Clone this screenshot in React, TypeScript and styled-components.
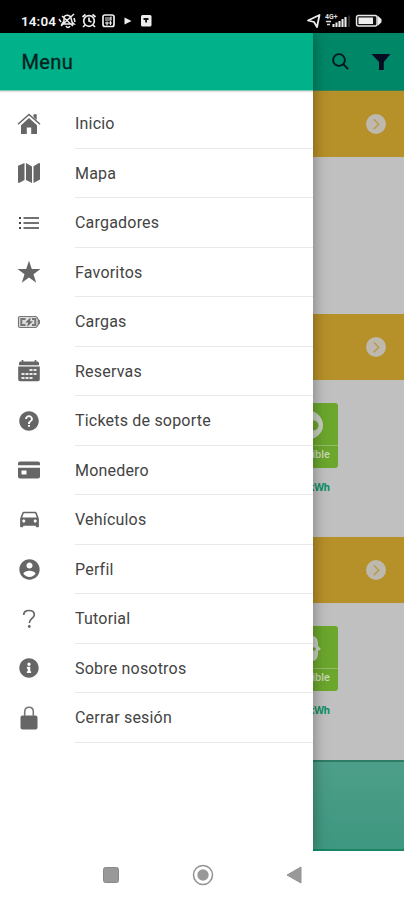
import React from "react";
import styled, { createGlobalStyle } from "styled-components";
import { IoMdHelpCircle, IoMdCar, IoMdContact } from "react-icons/io";
import { FaInfoCircle } from "react-icons/fa";

const GlobalStyle = createGlobalStyle`
  * { box-sizing: border-box; }
  body { margin: 0; background: #fff; font-family: Roboto, "Liberation Sans", sans-serif; }
`;

const Phone = styled.div`
  display: flex;
  flex-direction: column;
  width: 404px;
  height: 900px;
  overflow: hidden;
  background: #fff;
`;

const StatusBar = styled.header`
  display: flex;
  align-items: center;
  height: 33px;
  padding: 9px 20px 0 21px;
  background: #000;
  color: #f4f4f4;
  svg { display: block; flex: none; }
`;

const Clock = styled.span`
  width: 37px;
  font-size: 13.5px;
  font-weight: 600;
  line-height: 16px;
  letter-spacing: 0.1px;
`;

const Gap = styled.span`
  flex: 1;
`;

const Screen = styled.div`
  position: relative;
  height: 818px;
`;

const Page = styled.main`
  display: flex;
  flex-direction: column;
  height: 818px;
  background: #c0c0c0;
`;

const Toolbar = styled.div`
  display: flex;
  align-items: center;
  justify-content: flex-end;
  gap: 21px;
  flex: none;
  height: 58px;
  padding: 0 13px 0 0;
  background: #008767;
  border-bottom: 1px solid #388359;
  color: #07171d;
`;

const StationHeader = styled.div`
  display: flex;
  align-items: center;
  justify-content: flex-end;
  height: 66px;
  flex: none;
  padding-right: 18px;
  background: #b69028;
`;

const StationBody = styled.section<{ $h: number }>`
  display: flex;
  flex-direction: column;
  align-items: flex-end;
  height: ${(p) => p.$h}px;
  flex: none;
  padding: 23px 66px 0 0;
`;

const Plug = styled.div`
  display: flex;
  flex-direction: column;
  width: 65px;
  height: 65px;
  background: #6ba62d;
  border-radius: 3px;
  overflow: hidden;
`;

const PlugArt = styled.div`
  height: 43px;
  border-bottom: 1px solid #93bd68;
  svg { display: block; }
`;

const PlugState = styled.span`
  padding-right: 8px;
  color: #c9d9b6;
  font: 500 11px/17px Roboto, sans-serif;
  text-align: right;
`;

const Power = styled.span`
  margin: 12px 8px 0 0;
  color: #079064;
  font: 700 10px/15px "Open Sans", sans-serif;
  letter-spacing: -0.2px;
`;

const Footer = styled.footer`
  flex: 1;
  border-top: 2px solid #2e7c64;
  border-bottom: 2px solid #178566;
  background: linear-gradient(#4d9e89, #3e9780);
`;

const Drawer = styled.aside`
  position: absolute;
  top: 0;
  left: 0;
  width: 313px;
  height: 818px;
  background: #fff;
  box-shadow: 0 0 14px rgba(0, 0, 0, 0.38);
  clip-path: inset(0 -30px 0 0);
`;

const DrawerHeader = styled.h1`
  height: 58px;
  margin: 0;
  padding-left: 21.5px;
  background: #00b189;
  border-bottom: 1px solid #82c9b6;
  box-shadow: 0 1px 1px rgba(0, 0, 0, 0.12);
  color: #03201f;
  font-size: 20px;
  font-weight: 400;
  line-height: 58px;
  letter-spacing: 0.4px;
  -webkit-text-stroke: 0.3px #03201f;
`;

const List = styled.ul`
  margin: 8px 0 0;
  padding: 0;
  list-style: none;
`;

const Item = styled.li`
  display: flex;
  height: 49.5px;
`;

const IconCell = styled.span`
  display: flex;
  align-items: center;
  justify-content: center;
  width: 24px;
  margin: 0 34px 0 17px;
  color: #666;
  svg { display: block; flex: none; }
`;

const Label = styled.span`
  flex: 1;
  padding-top: 1px;
  border-bottom: 1px solid #e9e9e9;
  color: #444;
  font-size: 16px;
  line-height: 48.5px;
  letter-spacing: 0.2px;
`;

const SystemNav = styled.nav`
  display: flex;
  align-items: center;
  justify-content: space-between;
  height: 49px;
  padding: 0 102px 2px 103px;
  svg { display: block; }
`;

const HomeIcon = () => (
  <svg width="24" height="24" viewBox="0 0 24 24" fill="currentColor">
    <path d="M4 13.200 12 6l8 7.200V22h-5.800v-6.500H9.800V22H4z" />
    <path d="M1 12.200 12 2.500l11 9.700" fill="none" stroke="currentColor" strokeWidth="1.500" />
    <path d="M16.500 2.200h3.200v5.700l-3.200-2.900z" />
  </svg>
);

const MapIcon = () => (
  <svg width="22" height="22" viewBox="0 0 22 22" fill="currentColor">
    <path d="M0 3.800 6.500 1v17L1.500 20.800C.5 21.200 0 20.800 0 20zM8 1l6 3.500V21l-6-3zM15.500 4.300 20.500 1.200C21.500.8 22 1.200 22 2v15.500L15.500 21z" />
  </svg>
);

const ListIcon = () => (
  <svg width="22" height="16" viewBox="0 0 22 16" fill="none" stroke="#444" strokeWidth="1.500">
    <path d="M5.500 3H21M5.500 8H21M5.500 13H21" />
    <path d="M1 3h2M1 8h2M1 13h2" strokeWidth="2" />
  </svg>
);

const StarIcon = () => (
  <svg width="24" height="24" viewBox="0 0 24 24" fill="currentColor">
    <path d="m12 .8 2.800 8.200h8.700l-7 5.200 2.700 8.600L12 17.500l-7.200 5.300 2.700-8.600-7-5.200h8.700z" />
  </svg>
);

const ChargeIcon = () => (
  <svg width="24" height="14" viewBox="0 0 24 14" fill="none" stroke="#777">
    <path d="M3 1.500h15.500c2 0 2 2.500 3 3.200 1.200.8 1.200 3.800 0 4.600-1 .7-1 3.200-3 3.200H3c-1 0-1.500-.5-1.500-1.500V3C1.500 2 2 1.500 3 1.500z" fill="#ddd" strokeWidth="1.200" />
    <path d="M8.500 4H4.300v6h4.200M15 4h3.300v6H15" strokeWidth="2" />
    <path d="m13.500 2.800-4.800 4.500h2.600l-.8 4 5-4.800h-2.800z" fill="#666" strokeWidth=".4" />
    <path d="M21.700 5v4" strokeWidth="2" />
  </svg>
);

const CalendarIcon = () => (
  <svg width="24" height="24" viewBox="0 0 24 24">
    <path d="M2 4.200C2 3 3 2.400 4.200 2.400h15.600C21 2.400 22 3 22 4.200v2H2zM1.200 7.500h21.600v12.800c0 1.200-.8 2-2 2H3.200c-1.200 0-2-.8-2-2z" fill="#666" />
    <path d="M5.500 1v3M18.500 1v3" stroke="#666" strokeWidth="1.600" />
    <path d="M12.500 11h7M4.500 15h15M4.500 19h11" stroke="#e8e8e8" strokeWidth="2.200" strokeDasharray="3 1" />
  </svg>
);

const CardIcon = () => (
  <svg width="22" height="18" viewBox="0 0 22 18">
    <path d="M0 4.300V2.500C0 1.200.8.500 2 .500h18c1.200 0 2 .7 2 2v1.800zM0 6.800h22V15.500c0 1.200-.8 2-2 2H2c-1.200 0-2-.8-2-2z" fill="#666" />
    <path d="M3.500 9.500h5v4h-5z" fill="#fff" />
  </svg>
);

const QuestionIcon = () => (
  <svg width="14" height="20" viewBox="0 0 14 20" fill="none" stroke="#666" strokeWidth="1.700">
    <path d="M1.700 6C1.700 3 4 1.500 7 1.500S12.300 3 12.300 5.700C12.300 9.300 7.300 9.500 7.300 14" />
    <circle cx="7.300" cy="17.500" r="1.400" fill="#666" stroke="none" />
  </svg>
);

const LockIcon = () => (
  <svg width="18" height="24" viewBox="0 0 18 24">
    <rect x=".5" y="9.500" width="17" height="14" rx="2" fill="#666" />
    <path d="M4.700 10V5.500C4.700 2.800 6.500 1.200 9 1.200s4.300 1.600 4.300 4.300V10" fill="none" stroke="#777" strokeWidth="1.600" />
  </svg>
);

const Chevron = () => (
  <svg width="20" height="20" viewBox="0 0 20 20">
    <circle cx="10" cy="10" r="10" fill="#bdb9ae" />
    <path d="m7.800 5.300 4.900 4.900-4.900 4.900" fill="none" stroke="#b99b4b" strokeWidth="1.500" />
  </svg>
);

const SocketRound = () => (
  <svg width="65" height="42" viewBox="0 0 65 42">
    <ellipse cx="33" cy="22" rx="17" ry="15" fill="#c6cec0" />
    <circle cx="40.500" cy="22.500" r="5" fill="#6ba62d" />
    <circle cx="25.500" cy="22.500" r="5" fill="#6ba62d" />
  </svg>
);

const SocketNotched = () => (
  <svg width="65" height="42" viewBox="0 0 65 42">
    <path d="M21 10h18c4 0 6 3 6 8v2l3 3-3 2v2c0 5-2 8-6 8H21z" fill="#c6cec0" />
    <circle cx="41" cy="23" r="1.700" fill="#6ba62d" />
  </svg>
);

const items: [string, React.ReactNode][] = [
  ["Inicio", <HomeIcon />],
  ["Mapa", <MapIcon />],
  ["Cargadores", <ListIcon />],
  ["Favoritos", <StarIcon />],
  ["Cargas", <ChargeIcon />],
  ["Reservas", <CalendarIcon />],
  ["Tickets de soporte", <IoMdHelpCircle size={24} />],
  ["Monedero", <CardIcon />],
  ["Vehículos", <IoMdCar size={25} />],
  ["Perfil", <IoMdContact size={25} />],
  ["Tutorial", <QuestionIcon />],
  ["Sobre nosotros", <FaInfoCircle size={20} />],
  ["Cerrar sesión", <LockIcon />],
];

const StatusIcons = () => (
  <svg width="96" height="18" viewBox="0 0 96 18" fill="none" stroke="#eee" strokeWidth="1.700">
    <path d="m3 14 13-12M4 4l11 10M6 5c2-3 6-2 7 1l1 4 2 2H4l2-3zM8 14c1 2 3 2 4 0M1 7l2 3M16 6l1 4" strokeWidth="1.500" />
    <circle cx="31" cy="9" r="5.300" />
    <path d="M31 5.500V9l2.500 1M24.500 5l3-2.500M37.500 5l-3-2.500M27 13l-2 2M35 13l2 2" />
    <rect x="45" y="3" width="11" height="11.500" rx="2" />
    <path d="M47 6h6v2h-6M53 4.500v4M47 11h7M49 9.500v4M52.500 9v4" strokeWidth="1.200" />
    <path d="m66.500 5.500 7 3.500-7 3.500z" fill="#eee" stroke="none" />
    <rect x="83" y="3" width="10.500" height="11.500" rx="1.500" fill="#eee" stroke="none" />
    <path d="M85.500 6h5v2h-5zM87.200 8h1.800v2.500h-1.800z" fill="#111" stroke="none" />
  </svg>
);

const SignalIcons = () => (
  <svg width="78" height="18" viewBox="0 0 78 18">
    <path d="M2 8.500 13.500 3 11 15 8 10z" fill="none" stroke="#eee" strokeWidth="1.800" strokeLinejoin="round" />
    <text x="19" y="7" fill="#ddd" fontSize="7" fontWeight="700" fontFamily="Roboto">4G+</text>
    <path d="M20 9.500h5M21 12.500h3" stroke="#ddd" strokeWidth="1.500" />
    <path d="M27.500 15v-3M30.500 15v-4.500M33.500 15V9M36.500 15V7M39.500 15V5" stroke="#e8e8e8" strokeWidth="2.100" />
    <path d="M43 15V3.500" stroke="#555" />
    <rect x="50.500" y="3.500" width="20.500" height="10.500" rx="2" fill="#111" stroke="#e8e8e8" strokeWidth="1.400" />
    <rect x="52.500" y="5.500" width="14.500" height="6.500" fill="#eee" />
    <path d="m71.500 3.500 4 3.700v3l-4 3.800z" fill="#eee" />
  </svg>
);

export default function App() {
  return (
    <Phone>
      <GlobalStyle />
      <StatusBar>
        <Clock>14:04</Clock>
        <StatusIcons />
        <Gap />
        <SignalIcons />
      </StatusBar>
      <Screen>
        <Page>
          <Toolbar>
            <svg width="19" height="19" viewBox="0 0 19 19" fill="none" stroke="currentColor" strokeWidth="1.900">
              <circle cx="8" cy="8" r="5.900" />
              <path d="m12.200 12.200 5 5" />
            </svg>
            <svg width="20" height="18" viewBox="0 0 20 18" fill="#050d23">
              <path d="M.5 1h19l-6.700 8v8H8V9z" />
            </svg>
          </Toolbar>
          <StationHeader><Chevron /></StationHeader>
          <StationBody $h={156.5} />
          <StationHeader><Chevron /></StationHeader>
          <StationBody $h={157}>
            <Plug><PlugArt><SocketRound /></PlugArt><PlugState>Disponible</PlugState></Plug>
            <Power>7.4 kWh</Power>
          </StationBody>
          <StationHeader><Chevron /></StationHeader>
          <StationBody $h={157}>
            <Plug><PlugArt><SocketNotched /></PlugArt><PlugState>Disponible</PlugState></Plug>
            <Power>7.4 kWh</Power>
          </StationBody>
          <Footer />
        </Page>
        <Drawer>
          <DrawerHeader>Menu</DrawerHeader>
          <List>
            {items.map(([label, icon]) => (
              <Item key={label}>
                <IconCell>{icon}</IconCell>
                <Label>{label}</Label>
              </Item>
            ))}
          </List>
        </Drawer>
      </Screen>
      <SystemNav>
        <svg width="16" height="16"><rect x=".5" y=".5" width="15" height="15" rx="2" fill="#999" stroke="#888" /></svg>
        <svg width="22" height="22"><circle cx="11" cy="11" r="9.500" fill="none" stroke="#929292" strokeWidth="1.500" /><circle cx="11" cy="11" r="5.700" fill="#999" /></svg>
        <svg width="16" height="18"><path d="M1 9 15 1v16z" fill="#999" stroke="#929292" /></svg>
      </SystemNav>
    </Phone>
  );
}
